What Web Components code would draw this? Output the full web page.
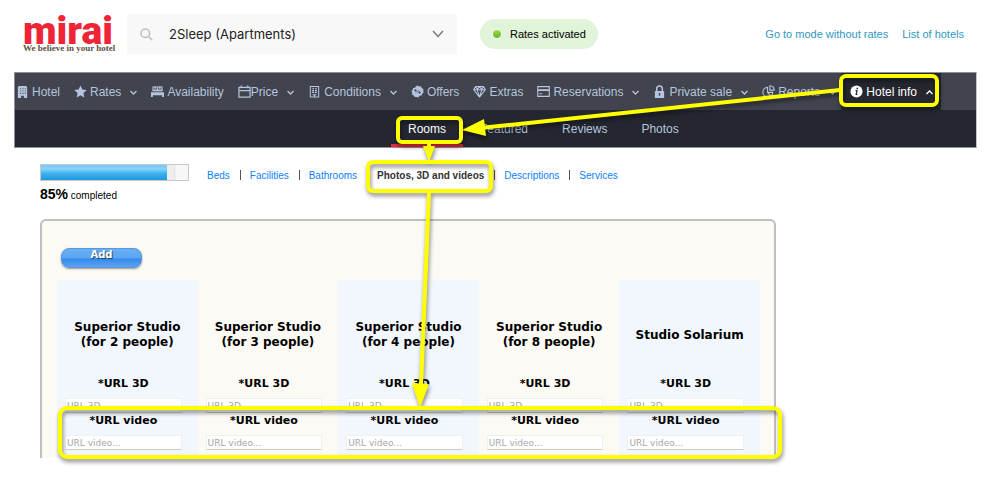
<!DOCTYPE html>
<html lang="en">
<head>
<meta charset="utf-8">
<title>Mirai – Hotel info</title>
<style>
  body { margin: 0; background: #fff; color: #000; font-family: "Liberation Sans", Arial, sans-serif; }
</style>
</head>
<body>
<mirai-page></mirai-page>

<script>
const ICONS = {
  hotel: '<path d="M3 1h8l1 1.500V14H8.500v-2.500h-3V14H2V2.500z"/><path d="M4.500 4h1M7 4h1M9.500 4h1M4.500 6.500h1M7 6.500h1M9.500 6.500h1M4.500 9h1M7 9h1M9.500 9h1" stroke="#41434e" stroke-width="1.200"/>',
  star: '<path d="M7 .6l2 4.300 4.700.6-3.500 3.200.9 4.700L7 11.100l-4.100 2.300.9-4.700L.3 5.500 5 4.900z"/>',
  bed: '<path d="M1.500 1.500h11V7h-11z"/><path d="M0 7.500h14V13h-2v-2H2v2H0z"/><path d="M3 4.500h3M8 4.500h3M3 2.500v2M6 2.500v2M8 2.500v2M11 2.500v2" stroke="#41434e" stroke-width=".9"/><path d="M0 7.500h14" stroke="#41434e" stroke-width=".6"/>',
  calendar: '<path d="M1 2.500h12v10.500H1zM1 6h12M3.500 .5v3M10.500 .5v3" fill="none" stroke="currentColor" stroke-width="1.300"/>',
  building: '<path d="M2.500 1.500h9v11.500h-9z" fill="none" stroke="currentColor" stroke-width="1.100"/><path d="M4.500 4h2M7.500 4h2M4.500 6h2M7.500 6h2M4.500 8h2M7.500 8h2M5 10.500h4M7 10v3" stroke="currentColor" stroke-width="1.200"/>',
  badge: '<path d="M7 .5l1.700 1 2-.1.900 1.800 1.700 1-.1 2 .4 1.800-1.500 1.300-.7 1.900-2 .3L7.800 13.400 6 12.800l-2 .2-1-1.700-1.800-.9.1-2L.4 6.600l1.400-1.400.5-1.900 2-.4L5.500 1.300z"/><circle cx="4.800" cy="5.800" r="1.200" fill="#41434e"/><circle cx="9.200" cy="8.200" r="1.200" fill="#41434e"/><path d="M5 8.500l4-3" stroke="#41434e" stroke-width=".7"/>',
  gem: '<path d="M3 1.500h8l2.300 3.500L7 13 .7 5zM.7 5h12.600M4.500 5L7 13l2.500-8L7 1.500zM3 1.500L4.500 5M11 1.500L9.500 5" fill="none" stroke="currentColor" stroke-width="1.100" stroke-linejoin="round"/>',
  card: '<path d="M.8 1.800h12.400v10.400H.8z" fill="none" stroke="currentColor" stroke-width="1.200"/><path d="M1 5.500h12" stroke="currentColor" stroke-width="2"/><path d="M2.500 9.500h3" stroke="currentColor"/>',
  lock: '<path d="M4 7V4a3 3 0 0 1 6 0v3" fill="none" stroke="currentColor" stroke-width="1.600"/><path d="M2 6.500h10V14H2z"/><path d="M7 8.500v3" stroke="#41434e" stroke-width="1.500"/>',
  pie: '<path d="M6 2.500A5.300 5.300 0 1 0 11.500 8H6zM8.500 .8A5 5 0 0 1 13.200 5.500H8.500zM6 8l3.500 4" fill="none" stroke="currentColor" stroke-width="1.200"/>',
  info: '<circle cx="7" cy="7" r="6.500"/><path d="M6 6h1.500l-.8 4.200H8" fill="none" stroke="#242730" stroke-width="1.300"/><circle cx="7.800" cy="3.700" r=".9" fill="#242730"/>'
};

function define(name, html, setup) {
  const template = document.createElement('template');
  template.innerHTML = html;
  customElements.define(name, class extends HTMLElement {
    constructor() {
      super();
      this.attachShadow({ mode: 'open' }).append(template.content.cloneNode(true));
    }
    connectedCallback() { if (setup) setup(this, this.shadowRoot); }
  });
}

define('nav-item', `
  <style>
    :host { display: flex; flex: none; }
    a { display: flex; align-items: center; gap: 3px; color: #b6c5dd; text-decoration: none; white-space: nowrap; }
    .icon { width: 13px; height: 13px; fill: currentColor; }
    .chev { display: none; width: 7px; height: 5px; margin: 2px 0 0 6px; fill: none; stroke: currentColor; stroke-width: 1.300; }
    :host([menu]) .chev { display: block; }
    :host([tight]) a { gap: 0; }
    :host([tight]) .chev { margin-left: 9px; }
    :host([active]) .chev { transform: rotate(180deg); }
    :host([active]) a { color: #fff; background: #242730; padding: 0 8px 0 9px; }
  </style>
  <a href="#"><svg class="icon" viewBox="0 0 14 14" aria-hidden="true"></svg><span><slot></slot></span>
    <svg class="chev" viewBox="0 0 7 5" aria-hidden="true"><path d="M.5 1l3 3 3-3"/></svg></a>`,
  (el, root) => { root.querySelector('.icon').innerHTML = ICONS[el.getAttribute('icon')]; });

define('sub-item', `
  <style>
    :host { display: flex; }
    a { display: flex; align-items: center; padding: 3px 17px 0; border-bottom: 3px solid transparent; color: #b6c5dd; text-decoration: none; }
    :host([active]) a { color: #fff; border-color: #ea2839; }
  </style>
  <a href="#"><slot></slot></a>`);

define('mirai-header', `
  <style>
    :host { display: flex; align-items: center; height: 40px; padding: 14px 13px 18px 9px; font-size: 11px; }
    .logo { width: 92px; flex: none; text-decoration: none; }
    .name { display: block; height: 28px; color: #ee2536; font: 900 39px/32px Roboto, sans-serif; }
    .tag { display: block; color: #5c5040; font: bold 9px/10px "Liberation Serif", serif; white-space: nowrap; }
    .search { display: flex; align-items: center; position: relative; flex: none; width: 330px; margin-left: 12px; }
    select { appearance: none; width: 100%; height: 40px; margin: 0; border: 0; border-radius: 0; padding: 0 42px; background: #f8f8f8; color: #222; font: 13px Inter, sans-serif; }
    .glass, .down { position: absolute; pointer-events: none; fill: none; }
    .glass { left: 13px; width: 13px; height: 13px; stroke: #b9bec9; stroke-width: 1.500; }
    .down { right: 13px; width: 12px; height: 8px; stroke: #777; stroke-width: 1.500; }
    .status { display: flex; align-items: center; gap: 8px; height: 30px; margin-left: 23px; padding: 0 12px; border-radius: 15px; background: #e1f3d8; white-space: nowrap; }
    .dot { width: 8px; height: 8px; border: 1px solid #f2f8ef; border-radius: 50%; background: linear-gradient(#a5d93c, #5cb531); }
    nav { display: flex; gap: 14px; margin-left: auto; white-space: nowrap; }
    a { color: #2f97c1; text-decoration: none; }
  </style>
  <a class="logo" href="#"><span class="name">mirai</span><span class="tag">We believe in your hotel</span></a>
  <div class="search">
    <select aria-label="Hotel"><option>2Sleep (Apartments)</option></select>
    <svg class="glass" viewBox="0 0 13 13" aria-hidden="true"><circle cx="5.300" cy="5.300" r="4.300"/><path d="M8.500 8.500l3.800 3.800"/></svg>
    <svg class="down" viewBox="0 0 12 8" aria-hidden="true"><path d="M1 1l5 5.500L11 1"/></svg>
  </div>
  <div class="status"><span class="dot"></span>Rates activated</div>
  <nav><a href="#">Go to mode without rates</a><a href="#">List of hotels</a></nav>`);

define('mirai-nav', `
  <style>
    :host { display: block; border: 1px solid #8f9197; border-right-color: #c4c5c9; background: #242730; font-size: 12px; }
    .main { display: flex; gap: 14px; height: 37px; padding: 0 35px 0 1px; background: #41434e; }
    .main nav-item[active] { margin-left: auto; }
    .main nav-item[icon="pie"] { margin-right: -10px; }
    .sub { display: flex; height: 37px; padding-left: 376px; }
  </style>
  <nav class="main">
    <nav-item icon="hotel">Hotel</nav-item>
    <nav-item icon="star" menu>Rates</nav-item>
    <nav-item icon="bed">Availability</nav-item>
    <nav-item icon="calendar" menu tight>Price</nav-item>
    <nav-item icon="building" menu>Conditions</nav-item>
    <nav-item icon="badge">Offers</nav-item>
    <nav-item icon="gem">Extras</nav-item>
    <nav-item icon="card" menu>Reservations</nav-item>
    <nav-item icon="lock" menu>Private sale</nav-item>
    <nav-item icon="pie" menu>Reports</nav-item>
    <nav-item icon="info" menu tight-end active>Hotel info</nav-item>
  </nav>
  <nav class="sub">
    <sub-item active>Rooms</sub-item><sub-item>Featured</sub-item><sub-item>Reviews</sub-item><sub-item>Photos</sub-item>
  </nav>`.replace(' tight-end', ''));

define('completion-bar', `
  <style>
    :host { display: block; width: 149px; flex: none; }
    .track { box-sizing: border-box; height: 17px; border: 1px solid #c9c9c9; background: linear-gradient(90deg, #eee 133px, #ddd 133px, #f7f7f7 135px); }
    .fill { width: 86%; height: 100%; background: linear-gradient(#6fc8f8, #8ad4fb 25%, #42b2ee 55%, #1b98e0); }
    p { margin: 4px 0 0; font-size: 10px; line-height: 18px; }
    b { font-size: 14px; }
  </style>
  <div class="track"><div class="fill"></div></div>
  <p><b>85%</b> completed</p>`);

define('section-links', `
  <style>
    :host { display: flex; align-items: center; gap: 10px; height: 20px; font-size: 10px; white-space: nowrap; }
    a { color: #0c80f8; text-decoration: none; }
    a[aria-current] { color: #333; font-weight: bold; }
    i { width: 1px; height: 10px; margin-right: -1px; background: #555; }
  </style>
  <a href="#">Beds</a><i></i><a href="#">Facilities</a><i></i><a href="#">Bathrooms</a><i></i><a href="#" aria-current="page">Photos, 3D and videos</a><i></i><a href="#">Descriptions</a><i></i><a href="#">Services</a>`);

define('room-column', `
  <style>
    :host { display: block; flex: 1; padding-bottom: 8px; font: bold 11px/16px "DejaVu Sans", Verdana, sans-serif; }
    :host(:nth-child(odd)) { background: #f2f7fe; }
    h3 { display: flex; flex-direction: column; align-items: center; justify-content: center; height: 82px; margin: 0; padding-top: 14px; font-size: 12px; line-height: 15px; text-align: center; }
    label { display: block; margin: 0 16px 0 8px; text-align: center; }
    input { box-sizing: border-box; display: block; width: 100%; height: 15px; margin: 6px 0 0; border: 1px solid #eef0f2; border-bottom-color: #ccc; padding: 0 1px; background: #fff; font: 9px "DejaVu Sans", Verdana, sans-serif; }
    input::placeholder { color: #a6a6a6; opacity: 1; }
  </style>
  <h3><span><slot></slot></span></h3>
  <label>*URL 3D<input type="text" placeholder="URL 3D..."></label>
  <label>*URL video<input type="text" placeholder="URL video..."></label>`);

define('rooms-panel', `
  <style>
    :host { display: block; box-sizing: border-box; max-width: 736px; padding: 27px 14px 0 15px; border: 2px solid #bebebe; border-bottom: 0; border-radius: 6px 6px 0 0; background: #fbfaf4; }
    button { display: block; width: 81px; height: 20px; margin: 0 0 12px 4px; border: 1px solid #5b95dc; border-radius: 8px; padding: 0 0 6px; background: linear-gradient(#69b0f3, #5ba6f2 50%, #348aee 55%, #5da2ef); box-shadow: 0 1px 2px #0006; color: #fff; font: bold 10px/12px "DejaVu Sans", Verdana, sans-serif; text-shadow: 1px 1px 1px #0009; }
    .rooms { display: flex; }
  </style>
  <button type="button">Add</button>
  <div class="rooms">
    <room-column>Superior Studio<br>(for 2 people)</room-column>
    <room-column>Superior Studio<br>(for 3 people)</room-column>
    <room-column>Superior Studio<br>(for 4 people)</room-column>
    <room-column>Superior Studio<br>(for 8 people)</room-column>
    <room-column>Studio Solarium</room-column>
  </div>`);

define('guide-overlay', `
  <style>
    :host { position: absolute; left: 0; top: 0; pointer-events: none; }
    svg { display: block; overflow: visible; filter: drop-shadow(1px 3px 2px #0007); }
  </style>
  <svg width="960" height="480" aria-hidden="true">
    <g fill="none" stroke="#ffff00" stroke-width="4">
      <rect x="841" y="76" width="96" height="29" rx="5"/>
      <rect x="398" y="118" width="63" height="24" rx="4"/>
      <rect x="368" y="162" width="123" height="29" rx="5"/>
      <rect x="60" y="408" width="720" height="49" rx="7"/>
      <path d="M840 90L480 128M429 144v6M429 192L421 386"/>
    </g>
    <path fill="#ffff00" d="M462 130l22-11 2 17zM423 146h12l-6 16zM412 383l17 1-9 24z"/>
  </svg>`);

define('mirai-page', `
  <style>
    :host { display: block; position: relative; padding: 0 28px 34px 14px; }
    .top { display: flex; align-items: flex-start; gap: 18px; padding: 16px 0 14px 26px; }
    section-links { margin-top: 1px; }
    rooms-panel { margin-left: 26px; }
  </style>
  <mirai-header></mirai-header>
  <mirai-nav></mirai-nav>
  <main>
    <div class="top"><completion-bar></completion-bar><section-links></section-links></div>
    <rooms-panel></rooms-panel>
  </main>
  <guide-overlay></guide-overlay>`);
</script>
</body>
</html>
